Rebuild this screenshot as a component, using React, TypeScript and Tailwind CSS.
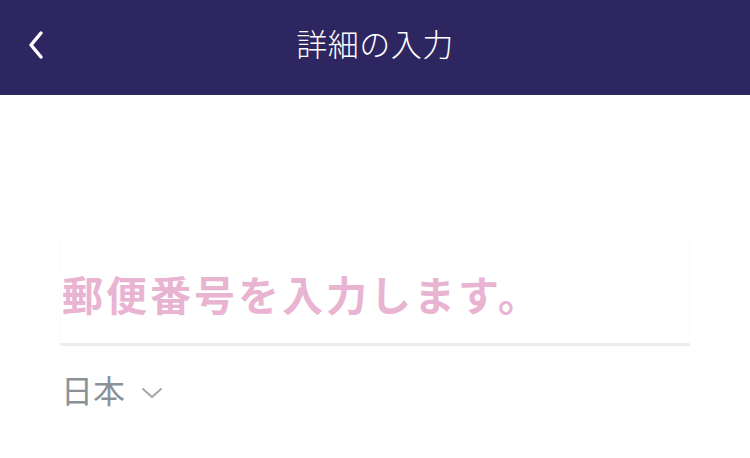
import React from 'react';

const App = () => {
  return (
    <div
      className="w-[750px] h-[458px] bg-white overflow-hidden"
      style={{ fontFamily: '"Noto Sans CJK JP", "Noto Sans", sans-serif' }}
    >
      <header className="relative flex items-start justify-center h-[95px] bg-[#2e2660]">
        <button type="button" className="absolute left-[22px] top-[29px] w-[28px] h-[32px] flex items-center justify-center">
          <svg width="22" height="30" viewBox="0 0 22 30" fill="none">
            <path d="M16 3 L6 15 L16 27" stroke="#ffffff" strokeWidth="3.5" strokeLinecap="round" strokeLinejoin="round" />
          </svg>
        </button>
        <h1 className="mt-[27px] text-white text-[31px] font-light leading-none tracking-[0.5px]">詳細の入力</h1>
      </header>

      <div className="px-[60px] pt-[146px]">
        <div className="h-[102px] border-t border-l border-r border-[#fbfbfb] flex items-center">
          <input
            className="w-full bg-transparent outline-none pl-[1px] text-[41px] font-bold tracking-[3px] placeholder:text-[#e9b4d2] leading-none"
            placeholder="郵便番号を入力します。"
          />
        </div>
        <div className="h-[3px] bg-[#ececec]" />
        <div className="flex items-center gap-[16px] mt-[27px] pl-[1px]">
          <span className="text-[32px] text-[#8b9199] leading-none">日本</span>
          <svg width="22" height="14" viewBox="0 0 22 14" fill="none" className="mt-[8px]">
            <path d="M2 3 L11 11 L20 3" stroke="#a3a7ab" strokeWidth="2" strokeLinecap="round" strokeLinejoin="round" />
          </svg>
        </div>
      </div>
    </div>
  );
};

export default App;
